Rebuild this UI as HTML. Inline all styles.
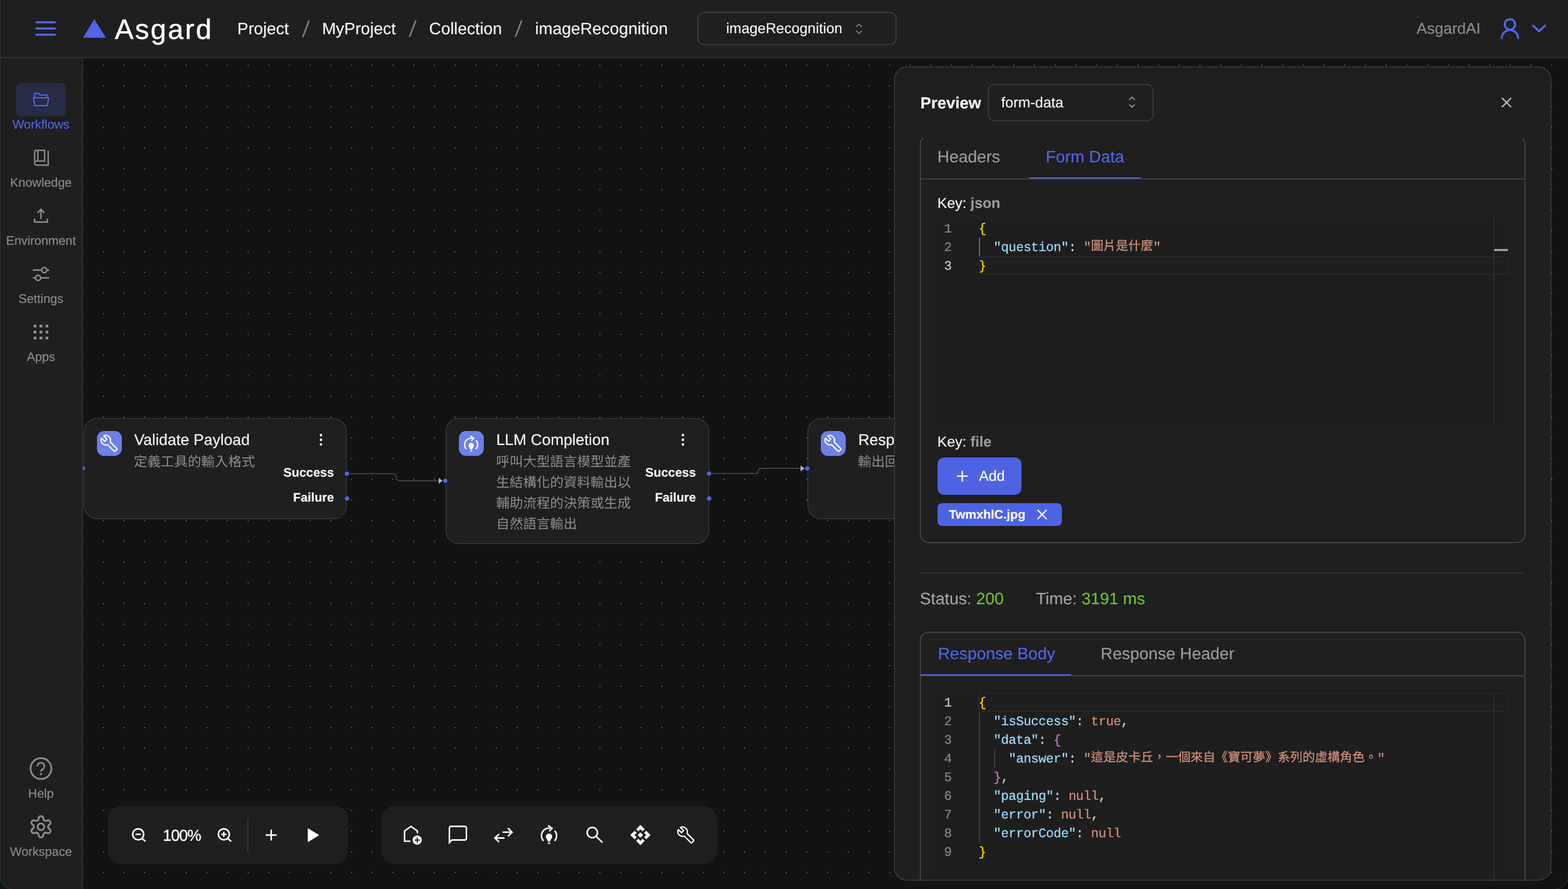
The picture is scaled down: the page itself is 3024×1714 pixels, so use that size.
<!DOCTYPE html>
<html lang="zh-Hant"><head><meta charset="utf-8"><title>Asgard - imageRecognition</title><style>
html,body{margin:0;padding:0;}
body{width:3024px;height:1714px;overflow:hidden;background:#131313;font-family:"Liberation Sans",sans-serif;position:relative;text-rendering:geometricPrecision;}
.b{position:absolute;}
.t{position:absolute;display:flex;align-items:baseline;white-space:nowrap;line-height:1;-webkit-text-stroke:0.2px;}
.st{display:block;width:0;flex:none;}
.m{font-family:"Liberation Mono",monospace;-webkit-text-stroke:0.3px;}
.ov{position:absolute;left:0;top:0;pointer-events:none;}
.cjk{display:inline-block;position:relative;}
.cji{height:0;vertical-align:baseline;}
.cjw{position:absolute;left:0;width:100%;display:block;}
.cjk .ct{position:absolute;left:0;top:0;width:100%;height:100%;line-height:1;white-space:nowrap;letter-spacing:0;font-family:"Liberation Sans","Noto Sans CJK TC",sans-serif;}
#root{position:absolute;left:0;top:0;width:3024px;height:1714px;will-change:transform;}
#canvas{position:absolute;left:0;top:0;width:3024px;height:1714px;overflow:hidden;}
</style></head><body><div id="root">
<div id="canvas">
<svg class="ov" width="3024" height="1714"><defs><pattern id="dots" x="158.4" y="124.95" width="39.905" height="39.905" patternUnits="userSpaceOnUse"><rect x="0" y="0" width="2" height="2" fill="#707070"/></pattern></defs><rect x="160" y="112" width="2864" height="1602" fill="url(#dots)"/></svg>
<svg class="ov" width="3024" height="1714" fill="none">
<g stroke="#454545" stroke-width="2">
<path d="M669 913.2 H757 Q764 913.2 764 920.1 Q764 927 771 927 H848"/>
<path d="M1367 913 H1457.5 Q1462.5 913 1462.5 908 Q1462.5 903.1 1467.5 903.1 H1546"/>
</g>
<g fill="#b4b4b8">
<path d="M846 921.3 L853.5 927 L846 932.7 Z"/>
<path d="M1544 897.5 L1551.5 903.2 L1544 908.9 Z"/>
</g>
</svg>
<div class="b" style="left:1557px;top:805.5px;width:508px;height:195px;background:#1f1f1f;border:2px solid #343434;border-radius:26px;box-sizing:border-box;"></div><div class="b" style="left:1583px;top:831px;width:48px;height:48px;background:#6d80e8;border-radius:14px;"></div><div class="t" style="top:821px;font-size:30px;color:#f5f5f5;left:1655.2px;"><i class="st" style="height:37px"></i><span>Response</span></div>
<span class="cjk" style="position:absolute;left:1654.4px;top:876.8px;width:78px;height:26px;font-size:26px;"><span class="ct" style="color:#8c8c8c;">輸出回</span></span>
<div class="b" style="left:160.6px;top:805.5px;width:508.8px;height:195px;background:#1f1f1f;border:2px solid #343434;border-radius:26px;box-sizing:border-box;"></div><div class="b" style="left:186.6px;top:831px;width:48px;height:48px;background:#6d80e8;border-radius:14px;"></div><div class="t" style="top:821px;font-size:30px;color:#f5f5f5;left:258.8px;"><i class="st" style="height:37px"></i><span>Validate Payload</span></div>
<span class="cjk" style="position:absolute;left:258px;top:876.8px;width:234px;height:26px;font-size:26px;"><span class="ct" style="color:#8c8c8c;">定義工具的輸入格式</span></span>
<div class="b" style="left:858.7px;top:805.5px;width:509px;height:243px;background:#1f1f1f;border:2px solid #343434;border-radius:26px;box-sizing:border-box;"></div><div class="b" style="left:884.7px;top:831px;width:48px;height:48px;background:#6d80e8;border-radius:14px;"></div><div class="t" style="top:821px;font-size:30px;color:#f5f5f5;left:956.9px;"><i class="st" style="height:37px"></i><span>LLM Completion</span></div>
<span class="cjk" style="position:absolute;left:956.8px;top:876.8px;width:260px;height:26px;font-size:26px;"><span class="ct" style="color:#8c8c8c;">呼叫大型語言模型並產</span></span>
<span class="cjk" style="position:absolute;left:956.8px;top:916.8px;width:260px;height:26px;font-size:26px;"><span class="ct" style="color:#8c8c8c;">生結構化的資料輸出以</span></span>
<span class="cjk" style="position:absolute;left:956.8px;top:956.8px;width:260px;height:26px;font-size:26px;"><span class="ct" style="color:#8c8c8c;">輔助流程的決策或生成</span></span>
<span class="cjk" style="position:absolute;left:956.8px;top:996.8px;width:156px;height:26px;font-size:26px;"><span class="ct" style="color:#8c8c8c;">自然語言輸出</span></span>
<div class="t" style="top:889px;font-size:24px;color:#fafafa;font-weight:700;right:2380px;"><i class="st" style="height:30px"></i><span>Success</span></div>
<div class="t" style="top:937px;font-size:24px;color:#fafafa;font-weight:700;right:2380px;"><i class="st" style="height:30px"></i><span>Failure</span></div>
<div class="t" style="top:889px;font-size:24px;color:#fafafa;font-weight:700;right:1682px;"><i class="st" style="height:30px"></i><span>Success</span></div>
<div class="t" style="top:937px;font-size:24px;color:#fafafa;font-weight:700;right:1682px;"><i class="st" style="height:30px"></i><span>Failure</span></div>
<div class="b" style="left:208px;top:1554px;width:463px;height:112px;background:#1f1f1f;border-radius:26px;"></div>
<div class="b" style="left:735px;top:1554px;width:648px;height:112px;background:#1f1f1f;border-radius:26px;"></div>
<div class="b" style="left:477px;top:1578px;width:2px;height:64px;background:#3a3a3a;"></div>
<div class="t" style="top:1583px;font-size:30.5px;color:#fafafa;left:150.7px;width:400px;justify-content:center;letter-spacing:-1.2px;-webkit-text-stroke:0.4px #fafafa;"><i class="st" style="height:38px"></i><span>100%</span></div>
<svg class="ov" width="3024" height="1714" fill="none">
<circle cx="160" cy="903" r="5" fill="#4a63e6" stroke="#1a1a1a" stroke-width="1.5"/>
<circle cx="669.1" cy="913.2" r="5" fill="#4a63e6" stroke="#1a1a1a" stroke-width="1.5"/>
<circle cx="669.1" cy="960.9" r="5" fill="#4a63e6" stroke="#1a1a1a" stroke-width="1.5"/>
<circle cx="858.9" cy="927" r="5" fill="#4a63e6" stroke="#1a1a1a" stroke-width="1.5"/>
<circle cx="1367.5" cy="913" r="5" fill="#4a63e6" stroke="#1a1a1a" stroke-width="1.5"/>
<circle cx="1367.5" cy="961" r="5" fill="#4a63e6" stroke="#1a1a1a" stroke-width="1.5"/>
<circle cx="1557.1" cy="903.2" r="5" fill="#4a63e6" stroke="#1a1a1a" stroke-width="1.5"/>
<circle cx="619" cy="839" r="2.4" fill="#fff"/>
<circle cx="619" cy="848" r="2.4" fill="#fff"/>
<circle cx="619" cy="857" r="2.4" fill="#fff"/>
<circle cx="1317" cy="839" r="2.4" fill="#fff"/>
<circle cx="1317" cy="848" r="2.4" fill="#fff"/>
<circle cx="1317" cy="857" r="2.4" fill="#fff"/>
<path transform="translate(210.3 855.2) scale(1.4) translate(-11.95 -12.15)" d="M22.7 19l-9.1-9.1c.9-2.3.4-5-1.5-6.9-2-2-5-2.4-7.4-1.3L9 6 6 9 1.6 4.7C.4 7.1.9 10.1 2.9 12.1c1.9 1.9 4.6 2.4 6.9 1.5l9.1 9.1c.4.4 1 .4 1.4 0l2.3-2.3c.5-.4.5-1.1.1-1.4z" fill="none" stroke="#fff" stroke-width="1.79" stroke-linejoin="round"/>
<path transform="translate(1606.5 855.2) scale(1.4) translate(-11.95 -12.15)" d="M22.7 19l-9.1-9.1c.9-2.3.4-5-1.5-6.9-2-2-5-2.4-7.4-1.3L9 6 6 9 1.6 4.7C.4 7.1.9 10.1 2.9 12.1c1.9 1.9 4.6 2.4 6.9 1.5l9.1 9.1c.4.4 1 .4 1.4 0l2.3-2.3c.5-.4.5-1.1.1-1.4z" fill="none" stroke="#fff" stroke-width="1.79" stroke-linejoin="round"/>
<g transform="translate(908.6 857.3) scale(0.86)"><g stroke="#fff" stroke-width="2.9" fill="none"><path d="M-10.68 9.96 A14.6 14.6 0 0 1 6.4 -13.12"/><path d="M10.85 -9.77 A14.6 14.6 0 0 1 10.68 9.96"/><path d="M-1.8 -19.8 L5.8 -14.2 L0.4 -8.6"/></g><path d="M-6.1 1.9 a6.1 6.1 0 1 1 12.2 0 c0 3.6 -3.5 5 -3.7 9.3 h-4.8 c-0.2 -4.3 -3.7 -5.7 -3.7 -9.3 z" fill="#fff"/><rect x="-2.2" y="13.2" width="4.4" height="2.6" fill="#fff"/></g>
<g stroke="#fff" stroke-width="2.9"><circle cx="266.5" cy="1608.6" r="10.6"/><path d="M274.1 1616.6 L280.7 1622.4"/><path d="M261.5 1608.6 h10"/></g>
<g stroke="#fff" stroke-width="2.9"><circle cx="431.7" cy="1608.6" r="10.6"/><path d="M439.3 1616.6 L445.9 1622.4"/><path d="M426.7 1608.6 h10"/><path d="M431.7 1603.6 v10"/></g>
<path d="M512.5 1610 h21 M523 1599.5 v21" stroke="#fff" stroke-width="2.9"/>
<path d="M594 1597.5 L594 1623 L615 1610.2 Z" fill="#fff" stroke="#fff" stroke-width="1" stroke-linejoin="round"/>
<path d="M791.8 1621.9 H780.2 V1602 L792.7 1593.4 L804.9 1602 V1606.6" stroke="#fff" stroke-width="2.9"/>
<circle cx="804.6" cy="1619.6" r="8.9" fill="#fff"/><path d="M799.4 1619.6 h10.4 M804.6 1614.4 v10.4" stroke="#1f1f1f" stroke-width="2.2"/>
<path d="M866.7 1624.5 V1596.3 a3 3 0 0 1 3 -3 H896.5 a3 3 0 0 1 3 3 V1616.5 a3 3 0 0 1 -3 3 H871.5 Z" stroke="#fff" stroke-width="2.9" stroke-linejoin="miter"/>
<path d="M969 1604.4 H987 M979.4 1596.6 L987.6 1604.4 L979.4 1612.2 M973 1615.7 H955 M962.6 1607.9 L954.4 1615.7 L962.6 1623.5" stroke="#fff" stroke-width="2.9"/>
<g transform="translate(1058.8 1611.2) scale(1)"><g stroke="#fff" stroke-width="2.9" fill="none"><path d="M-10.68 9.96 A14.6 14.6 0 0 1 6.4 -13.12"/><path d="M10.85 -9.77 A14.6 14.6 0 0 1 10.68 9.96"/><path d="M-1.8 -19.8 L5.8 -14.2 L0.4 -8.6"/></g><path d="M-6.1 1.9 a6.1 6.1 0 1 1 12.2 0 c0 3.6 -3.5 5 -3.7 9.3 h-4.8 c-0.2 -4.3 -3.7 -5.7 -3.7 -9.3 z" fill="#fff"/><rect x="-2.2" y="13.2" width="4.4" height="2.6" fill="#fff"/></g>
<g stroke="#fff" stroke-width="2.9"><circle cx="1142.3" cy="1605.2" r="9.9"/><path d="M1149.6 1612.6 L1162 1624.4"/></g>
<path d="M1235.10 1590.50 L1243.40 1598.80 L1239.30 1602.90 L1235.10 1598.70 L1230.90 1602.90 L1226.80 1598.80Z" fill="#fff"/><path d="M1254.60 1610.00 L1246.30 1618.30 L1242.20 1614.20 L1246.40 1610.00 L1242.20 1605.80 L1246.30 1601.70Z" fill="#fff"/><path d="M1235.10 1629.50 L1226.80 1621.20 L1230.90 1617.10 L1235.10 1621.30 L1239.30 1617.10 L1243.40 1621.20Z" fill="#fff"/><path d="M1215.60 1610.00 L1223.90 1601.70 L1228.00 1605.80 L1223.80 1610.00 L1228.00 1614.20 L1223.90 1618.30Z" fill="#fff"/><path d="M1235.1 1604.7 l5.3 5.3 l-5.3 5.3 l-5.3 -5.3 Z" fill="#fff"/>
<path transform="translate(1322.6 1609.9) scale(1.4) translate(-11.95 -12.15)" d="M22.7 19l-9.1-9.1c.9-2.3.4-5-1.5-6.9-2-2-5-2.4-7.4-1.3L9 6 6 9 1.6 4.7C.4 7.1.9 10.1 2.9 12.1c1.9 1.9 4.6 2.4 6.9 1.5l9.1 9.1c.4.4 1 .4 1.4 0l2.3-2.3c.5-.4.5-1.1.1-1.4z" fill="none" stroke="#fff" stroke-width="1.79" stroke-linejoin="round"/>
</svg>
</div>
<div class="b" style="left:0px;top:0px;width:3024px;height:110px;background:#1f1f1f;"></div>
<div class="b" style="left:0px;top:110px;width:3024px;height:2px;background:#333333;"></div>
<div class="t" style="top:10px;font-size:54px;color:#ffffff;left:221.6px;letter-spacing:3px;-webkit-text-stroke:0.6px #fff;"><i class="st" style="height:65px"></i><span>Asgard</span></div>
<div class="t" style="top:27px;font-size:32px;color:#f3f3f3;left:457.6px;"><i class="st" style="height:39px"></i><span>Project</span></div>
<div class="t" style="top:27px;font-size:32px;color:#f3f3f3;left:621.2px;"><i class="st" style="height:39px"></i><span>MyProject</span></div>
<div class="t" style="top:27px;font-size:32px;color:#f3f3f3;left:827.6px;"><i class="st" style="height:39px"></i><span>Collection</span></div>
<div class="t" style="top:27px;font-size:32px;color:#f3f3f3;left:1032px;"><i class="st" style="height:39px"></i><span>imageRecognition</span></div>
<div class="b" style="left:1345px;top:23px;width:384px;height:64px;border:2px solid #3d3d3d;border-radius:13px;box-sizing:border-box;"></div>
<div class="t" style="top:29px;font-size:28px;color:#f3f3f3;left:1400.4px;"><i class="st" style="height:35px"></i><span>imageRecognition</span></div>
<div class="t" style="top:28px;font-size:30px;color:#8c8c8c;left:2732px;"><i class="st" style="height:37px"></i><span>AsgardAI</span></div>
<div class="b" style="left:0px;top:112px;width:158px;height:1602px;background:#1f1f1f;"></div>
<div class="b" style="left:158px;top:112px;width:2px;height:1602px;background:#333333;"></div>
<div class="b" style="left:0px;top:0px;width:1px;height:1714px;background:#3a3a3a;"></div>
<div class="b" style="left:31px;top:160px;width:96px;height:64px;background:#272b45;border-radius:9px;"></div>
<div class="t" style="top:218px;font-size:24px;color:#4f65e5;left:-121px;width:400px;justify-content:center;"><i class="st" style="height:30px"></i><span>Workflows</span></div>
<div class="t" style="top:330px;font-size:24px;color:#8c8c8c;left:-121px;width:400px;justify-content:center;"><i class="st" style="height:30px"></i><span>Knowledge</span></div>
<div class="t" style="top:442px;font-size:24px;color:#8c8c8c;left:-121px;width:400px;justify-content:center;"><i class="st" style="height:30px"></i><span>Environment</span></div>
<div class="t" style="top:554px;font-size:24px;color:#8c8c8c;left:-121px;width:400px;justify-content:center;"><i class="st" style="height:30px"></i><span>Settings</span></div>
<div class="t" style="top:666px;font-size:24px;color:#8c8c8c;left:-121px;width:400px;justify-content:center;"><i class="st" style="height:30px"></i><span>Apps</span></div>
<div class="t" style="top:1508px;font-size:24px;color:#8c8c8c;left:-121px;width:400px;justify-content:center;"><i class="st" style="height:30px"></i><span>Help</span></div>
<div class="t" style="top:1620px;font-size:24px;color:#8c8c8c;left:-121px;width:400px;justify-content:center;"><i class="st" style="height:30px"></i><span>Workspace</span></div>
<svg class="ov" width="3024" height="1714" fill="none">
<path d="M70 43 H106 M70 55 H106 M70 67 H106" stroke="#4f65e5" stroke-width="4" stroke-linecap="round"/>
<path d="M181.8 37 L160 72.8 L204.4 72.8 Z" fill="#4f65e5"/>
<path d="M584 71.2 L596.2 39.4" stroke="#808080" stroke-width="3"/>
<path d="M789.8 71.2 L802 39.4" stroke="#808080" stroke-width="3"/>
<path d="M994 71.2 L1006.2 39.4" stroke="#808080" stroke-width="3"/>
<path d="M1651.5 51.4 L1656.8 46.6 L1662 51.4 M1651.5 59.4 L1656.8 64.2 L1662 59.4" stroke="#7a7a7a" stroke-width="2.2"/>
<g stroke="#4f65e5" stroke-width="4" stroke-linecap="round"><circle cx="2912" cy="47" r="10"/><path d="M2896.2 73.8 A15.8 15.8 0 0 1 2927.8 73.8"/><path d="M2956.5 49.5 L2968.2 60.3 L2980 49.5"/></g>
<g stroke="#4f65e5" stroke-width="2.5" stroke-linejoin="miter"><path d="M67 187.4 V179.9 H74.4 L76.9 183 H91.2 V187.4"/><path d="M64.4 188.5 H93.8 L91.2 203.8 H67 Z"/></g>
<g stroke="#8c8c8c" stroke-width="2.7"><path d="M93 290.6 V318.4 H70.7 A3.95 3.95 0 0 1 70.7 310.5 H86 V289.8 H70.3 A3.5 3.5 0 0 0 66.8 293.3 V314.6 M73 289.8 V310.5"/></g>
<g stroke="#8c8c8c" stroke-width="2.9"><path d="M79 422.6 V403.5 M72.6 410.4 L79 403.6 L85.4 410.4 M66.7 421.6 V428 H91.3 V421.6"/></g>
<g stroke="#8c8c8c" stroke-width="2.9"><path d="M63.4 520.7 H80 M90.8 520.7 H95 M63.4 535.8 H68 M78.9 535.8 H95"/><circle cx="85.4" cy="520.7" r="5"/><circle cx="73.5" cy="535.8" r="5"/></g>
<rect x="64.8" y="626" width="5.4" height="5.4" fill="#8c8c8c"/>
<rect x="64.8" y="637.6" width="5.4" height="5.4" fill="#8c8c8c"/>
<rect x="64.8" y="649.1" width="5.4" height="5.4" fill="#8c8c8c"/>
<rect x="76.3" y="626" width="5.4" height="5.4" fill="#8c8c8c"/>
<rect x="76.3" y="637.6" width="5.4" height="5.4" fill="#8c8c8c"/>
<rect x="76.3" y="649.1" width="5.4" height="5.4" fill="#8c8c8c"/>
<rect x="87.7" y="626" width="5.4" height="5.4" fill="#8c8c8c"/>
<rect x="87.7" y="637.6" width="5.4" height="5.4" fill="#8c8c8c"/>
<rect x="87.7" y="649.1" width="5.4" height="5.4" fill="#8c8c8c"/>
<g stroke="#8c8c8c" stroke-width="3.4"><circle cx="79" cy="1481.8" r="20.1"/></g>
<path d="M72.4 1477.5 a6.6 6.6 0 1 1 9.6 5.6 c-2.4 1.6 -3 2.6 -3 5" stroke="#8c8c8c" stroke-width="3.2"/><circle cx="79" cy="1492.6" r="2.2" fill="#8c8c8c"/>
<g stroke="#8c8c8c" stroke-width="3.5" stroke-linejoin="round"><path d="M79.00 1573.60 L80.06 1573.71 L81.10 1574.04 L82.07 1574.61 L82.94 1575.48 L83.43 1577.48 L83.72 1579.48 L84.22 1580.40 L84.75 1581.09 L85.30 1581.63 L85.90 1582.05 L86.56 1582.36 L87.31 1582.57 L88.17 1582.68 L89.21 1582.66 L91.09 1581.91 L93.07 1581.33 L94.26 1581.65 L95.24 1582.20 L96.04 1582.93 L96.67 1583.80 L97.10 1584.78 L97.33 1585.84 L97.33 1586.97 L97.01 1588.15 L95.52 1589.57 L93.93 1590.83 L93.39 1591.72 L93.05 1592.52 L92.86 1593.27 L92.80 1594.00 L92.86 1594.73 L93.05 1595.48 L93.39 1596.28 L93.93 1597.17 L95.52 1598.43 L97.01 1599.85 L97.33 1601.03 L97.33 1602.16 L97.10 1603.22 L96.67 1604.20 L96.04 1605.07 L95.24 1605.80 L94.26 1606.35 L93.07 1606.67 L91.09 1606.09 L89.21 1605.34 L88.17 1605.32 L87.31 1605.43 L86.56 1605.64 L85.90 1605.95 L85.30 1606.37 L84.75 1606.91 L84.22 1607.60 L83.72 1608.52 L83.43 1610.52 L82.94 1612.52 L82.07 1613.39 L81.10 1613.96 L80.06 1614.29 L79.00 1614.40 L77.94 1614.29 L76.90 1613.96 L75.93 1613.39 L75.06 1612.52 L74.57 1610.52 L74.28 1608.52 L73.78 1607.60 L73.25 1606.91 L72.70 1606.37 L72.10 1605.95 L71.44 1605.64 L70.69 1605.43 L69.83 1605.32 L68.79 1605.34 L66.91 1606.09 L64.93 1606.67 L63.74 1606.35 L62.76 1605.80 L61.96 1605.07 L61.33 1604.20 L60.90 1603.22 L60.67 1602.16 L60.67 1601.03 L60.99 1599.85 L62.48 1598.43 L64.07 1597.17 L64.61 1596.28 L64.95 1595.48 L65.14 1594.73 L65.20 1594.00 L65.14 1593.27 L64.95 1592.52 L64.61 1591.72 L64.07 1590.83 L62.48 1589.57 L60.99 1588.15 L60.67 1586.97 L60.67 1585.84 L60.90 1584.78 L61.33 1583.80 L61.96 1582.93 L62.76 1582.20 L63.74 1581.65 L64.93 1581.33 L66.91 1581.91 L68.79 1582.66 L69.83 1582.68 L70.69 1582.57 L71.44 1582.36 L72.10 1582.05 L72.70 1581.63 L73.25 1581.09 L73.78 1580.40 L74.28 1579.48 L74.57 1577.48 L75.06 1575.48 L75.93 1574.61 L76.90 1574.04 L77.94 1573.71Z"/><circle cx="79" cy="1594" r="6.5"/></g>
</svg>
<div class="b" style="left:1724px;top:128px;width:1268px;height:1570px;background:#1f1f1f;border:2px solid #383838;border-radius:25px;box-sizing:border-box;"></div>
<div class="t" style="top:171px;font-size:31px;color:#fafafa;font-weight:700;left:1775px;"><i class="st" style="height:38px"></i><span>Preview</span></div>
<div class="b" style="left:1905px;top:162px;width:320px;height:72px;border:2px solid #3d3d3d;border-radius:13px;box-sizing:border-box;"></div>
<div class="t" style="top:172px;font-size:28px;color:#f3f3f3;left:1931px;"><i class="st" style="height:35px"></i><span>form-data</span></div>
<div class="b" style="left:1726px;top:266px;width:1264px;height:1430px;overflow:hidden;">
<div class="b" style="left:-1726px;top:-266px;width:3024px;height:1714px;">
<div class="b" style="left:1774px;top:261px;width:1168px;height:786px;border:2px solid #464646;border-radius:17px;box-sizing:border-box;"></div>
<div class="b" style="left:1774px;top:1218px;width:1168px;height:700px;border:2px solid #464646;border-radius:17px;box-sizing:border-box;"></div>
<div class="t" style="top:274px;font-size:32px;color:#9b9b9b;left:1807.8px;"><i class="st" style="height:39px"></i><span>Headers</span></div>
<div class="t" style="top:274px;font-size:32px;color:#4f65e5;left:2016.8px;"><i class="st" style="height:39px"></i><span>Form Data</span></div>
<div class="b" style="left:1776px;top:344px;width:1164px;height:2px;background:#444444;"></div>
<div class="b" style="left:1985px;top:342px;width:215px;height:2px;background:#4f69ee;"></div>
<div class="t" style="top:366px;font-size:28px;color:#f3f3f3;left:1807.8px;"><i class="st" style="height:35px"></i><span>Key: <b style="color:#9b9b9b">json</b></span></div>
<div class="t" style="top:826px;font-size:28px;color:#f3f3f3;left:1807.8px;"><i class="st" style="height:35px"></i><span>Key: <b style="color:#9b9b9b">file</b></span></div>
<div class="b" style="left:1808px;top:882px;width:162px;height:72px;background:#4e63e4;border-radius:13px;"></div>
<div class="t" style="top:892px;font-size:28px;color:#fff;left:1888px;"><i class="st" style="height:35px"></i><span>Add</span></div>
<div class="b" style="left:1808px;top:970px;width:240px;height:44px;background:#4e63e4;border-radius:9px;"></div>
<div class="t" style="top:970px;font-size:24px;color:#fff;font-weight:700;left:1830px;"><i class="st" style="height:30px"></i><span>TwmxhlC.jpg</span></div>
<div class="b" style="left:1775px;top:1104px;width:1166px;height:2px;background:#333;"></div>
<div class="t" style="top:1126px;font-size:32px;color:#a3a3a3;left:1774px;"><i class="st" style="height:39px"></i><span>Status: <span style="color:#6dc13c">200</span></span></div>
<div class="t" style="top:1126px;font-size:32px;color:#a3a3a3;left:1998px;"><i class="st" style="height:39px"></i><span>Time: <span style="color:#6dc13c">3191 ms</span></span></div>
<div class="t" style="top:1232px;font-size:32px;color:#4f65e5;left:1809px;"><i class="st" style="height:39px"></i><span>Response Body</span></div>
<div class="t" style="top:1232px;font-size:32px;color:#9b9b9b;left:2122.6px;"><i class="st" style="height:39px"></i><span>Response Header</span></div>
<div class="b" style="left:1776px;top:1302px;width:1164px;height:2px;background:#444444;"></div>
<div class="b" style="left:1776px;top:1300px;width:290px;height:2px;background:#4f69ee;"></div>
<div class="b" style="left:1808px;top:422px;width:1100px;height:400px;background:#1e1e1e;"></div><div class="b" style="left:2880px;top:422px;width:1.5px;height:400px;background:#303030;"></div><div class="t m" style="top:417px;font-size:25px;color:#858585;right:1188.8px;letter-spacing:-0.55px;"><i class="st" style="height:31px"></i><span>1</span></div><div class="t m" style="top:417px;font-size:25px;color:#d4d4d4;left:1887.2px;white-space:pre;letter-spacing:-0.55px;"><i class="st" style="height:31px"></i><span><span style="color:#ffd700">{</span></span></div><div class="t m" style="top:453px;font-size:25px;color:#858585;right:1188.8px;letter-spacing:-0.55px;"><i class="st" style="height:31px"></i><span>2</span></div><div class="t m" style="top:453px;font-size:25px;color:#d4d4d4;left:1887.2px;white-space:pre;letter-spacing:-0.55px;"><i class="st" style="height:31px"></i><span>  <span style="color:#9cdcfe">"question"</span>: <span style="color:#ce9178">"</span><span class="cjk cji" style="width:120px;font-size:24px;"><span class="cjw" style="top:-21.12px;height:24px;"><span class="ct" style="color:#ce9178;">圖片是什麼</span></span></span><span style="color:#ce9178">"</span></span></div><div class="t m" style="top:489px;font-size:25px;color:#c6c6c6;right:1188.8px;letter-spacing:-0.55px;"><i class="st" style="height:31px"></i><span>3</span></div><div class="t m" style="top:489px;font-size:25px;color:#d4d4d4;left:1887.2px;white-space:pre;letter-spacing:-0.55px;"><i class="st" style="height:31px"></i><span><span style="color:#ffd700">}</span></span></div><div class="b" style="left:1888px;top:494px;width:1020px;height:36px;border:2px solid #282828;box-sizing:border-box;"></div>
<div class="b" style="left:1888px;top:458px;width:2px;height:36px;background:#707070;"></div>
<div class="b" style="left:2882px;top:480px;width:26px;height:4px;background:#a0a0a0;"></div>
<div class="b" style="left:1808px;top:1336px;width:1100px;height:400px;background:#1e1e1e;"></div><div class="b" style="left:2880px;top:1336px;width:1.5px;height:400px;background:#303030;"></div><div class="t m" style="top:1331px;font-size:25px;color:#c6c6c6;right:1188.8px;letter-spacing:-0.55px;"><i class="st" style="height:31px"></i><span>1</span></div><div class="t m" style="top:1331px;font-size:25px;color:#d4d4d4;left:1887.2px;white-space:pre;letter-spacing:-0.55px;"><i class="st" style="height:31px"></i><span><span style="color:#ffd700">{</span></span></div><div class="t m" style="top:1367px;font-size:25px;color:#858585;right:1188.8px;letter-spacing:-0.55px;"><i class="st" style="height:31px"></i><span>2</span></div><div class="t m" style="top:1367px;font-size:25px;color:#d4d4d4;left:1887.2px;white-space:pre;letter-spacing:-0.55px;"><i class="st" style="height:31px"></i><span>  <span style="color:#9cdcfe">"isSuccess"</span>: <span style="color:#ce9178">true</span>,</span></div><div class="t m" style="top:1403px;font-size:25px;color:#858585;right:1188.8px;letter-spacing:-0.55px;"><i class="st" style="height:31px"></i><span>3</span></div><div class="t m" style="top:1403px;font-size:25px;color:#d4d4d4;left:1887.2px;white-space:pre;letter-spacing:-0.55px;"><i class="st" style="height:31px"></i><span>  <span style="color:#9cdcfe">"data"</span>: <span style="color:#da70d6">{</span></span></div><div class="t m" style="top:1439px;font-size:25px;color:#858585;right:1188.8px;letter-spacing:-0.55px;"><i class="st" style="height:31px"></i><span>4</span></div><div class="t m" style="top:1439px;font-size:25px;color:#d4d4d4;left:1887.2px;white-space:pre;letter-spacing:-0.55px;"><i class="st" style="height:31px"></i><span>    <span style="color:#9cdcfe">"answer"</span>: <span style="color:#ce9178">"</span><span class="cjk cji" style="width:552px;font-size:24px;"><span class="cjw" style="top:-21.12px;height:24px;"><span class="ct" style="color:#ce9178;">這是皮卡丘，一個來自《寶可夢》系列的虛構角色。</span></span></span><span style="color:#ce9178">"</span></span></div><div class="t m" style="top:1475px;font-size:25px;color:#858585;right:1188.8px;letter-spacing:-0.55px;"><i class="st" style="height:31px"></i><span>5</span></div><div class="t m" style="top:1475px;font-size:25px;color:#d4d4d4;left:1887.2px;white-space:pre;letter-spacing:-0.55px;"><i class="st" style="height:31px"></i><span>  <span style="color:#da70d6">}</span>,</span></div><div class="t m" style="top:1511px;font-size:25px;color:#858585;right:1188.8px;letter-spacing:-0.55px;"><i class="st" style="height:31px"></i><span>6</span></div><div class="t m" style="top:1511px;font-size:25px;color:#d4d4d4;left:1887.2px;white-space:pre;letter-spacing:-0.55px;"><i class="st" style="height:31px"></i><span>  <span style="color:#9cdcfe">"paging"</span>: <span style="color:#ce9178">null</span>,</span></div><div class="t m" style="top:1547px;font-size:25px;color:#858585;right:1188.8px;letter-spacing:-0.55px;"><i class="st" style="height:31px"></i><span>7</span></div><div class="t m" style="top:1547px;font-size:25px;color:#d4d4d4;left:1887.2px;white-space:pre;letter-spacing:-0.55px;"><i class="st" style="height:31px"></i><span>  <span style="color:#9cdcfe">"error"</span>: <span style="color:#ce9178">null</span>,</span></div><div class="t m" style="top:1583px;font-size:25px;color:#858585;right:1188.8px;letter-spacing:-0.55px;"><i class="st" style="height:31px"></i><span>8</span></div><div class="t m" style="top:1583px;font-size:25px;color:#d4d4d4;left:1887.2px;white-space:pre;letter-spacing:-0.55px;"><i class="st" style="height:31px"></i><span>  <span style="color:#9cdcfe">"errorCode"</span>: <span style="color:#ce9178">null</span></span></div><div class="t m" style="top:1619px;font-size:25px;color:#858585;right:1188.8px;letter-spacing:-0.55px;"><i class="st" style="height:31px"></i><span>9</span></div><div class="t m" style="top:1619px;font-size:25px;color:#d4d4d4;left:1887.2px;white-space:pre;letter-spacing:-0.55px;"><i class="st" style="height:31px"></i><span><span style="color:#ffd700">}</span></span></div><div class="b" style="left:1888px;top:1336px;width:1020px;height:36px;border:2px solid #282828;box-sizing:border-box;"></div>
<div class="b" style="left:1888.3px;top:1372px;width:2px;height:252px;background:#404040;"></div>
<div class="b" style="left:1917px;top:1444px;width:2px;height:36px;background:#404040;"></div>
</div></div>
<svg class="ov" width="3024" height="1714" fill="none">
<path d="M2177.5 192.4 L2183 187.2 L2188.5 192.4 M2177.5 201.2 L2183 206.4 L2188.5 201.2" stroke="#8a8a8a" stroke-width="2.2"/>
<path d="M2896.5 188.6 L2914.5 206.6 M2914.5 188.6 L2896.5 206.6" stroke="#bdbdbd" stroke-width="2.6"/>
<path d="M1845.4 918 h21 M1855.9 907.5 v21" stroke="#fff" stroke-width="2.6"/>
<path d="M2001 983.2 L2018.6 1000.8 M2018.6 983.2 L2001 1000.8" stroke="#fff" stroke-width="2.6"/>
</svg>
<div class="b" style="left:0;top:1692px;width:22px;height:22px;background:radial-gradient(circle at 22px 0px, transparent 21px, #3a3a3a 21.5px, #0e1711 22.5px);"></div>
<div class="b" style="left:3002px;top:1692px;width:22px;height:22px;background:radial-gradient(circle at 0px 0px, transparent 21px, #3a3a3a 21.5px, #0a0c12 22.5px);"></div>
</div><script>(function(){var w=window.innerWidth;if(w&&w!==3024){var k=w/3024,r=document.getElementById("root");r.style.transformOrigin="0 0";r.style.transform="scale("+k+")";document.body.style.width=w+"px";document.body.style.height=(1714*k)+"px";}})();</script></body></html>
